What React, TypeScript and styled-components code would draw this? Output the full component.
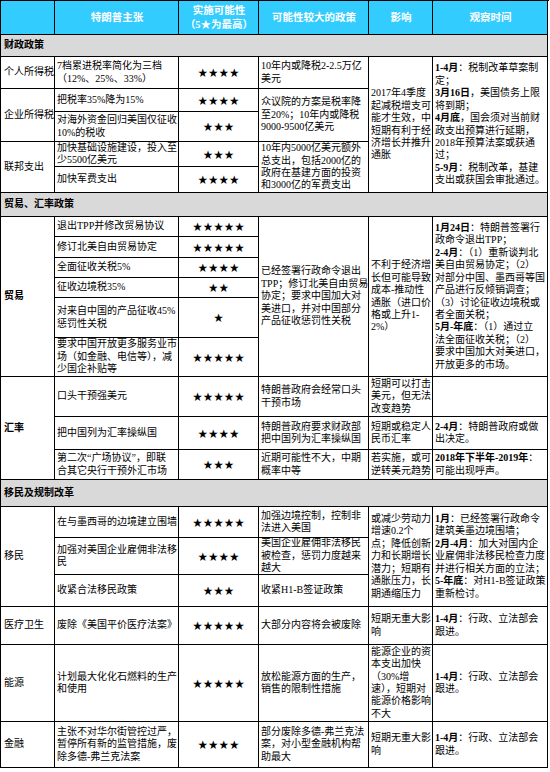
import React from 'react';
import styled, { createGlobalStyle } from 'styled-components';

const GlobalStyle = createGlobalStyle`
  html, body { margin: 0; padding: 0; background: #fff; }
  body { font-family: 'Liberation Serif', 'Noto Sans CJK SC', serif; }
`;

type Place = { $r: number; $rs?: number; $c: number; $cs?: number };

const Table = styled.div`
  display: grid;
  grid-template-columns: 54px 124px 80px 110px 64px 115px;
  grid-template-rows:
    34px 22px 32px 23px 30px 25px 26px 24px 20px 21px 20px 20px
    40px 39px 40px 33px 30px 27px 31px 37px 32px 38px 77px 46px;
  width: 548px;
  border-top: 1px solid #000;
  border-left: 1px solid #000;
`;

const Cell = styled.div<Place>`
  grid-row: ${p => `${p.$r} / span ${p.$rs ?? 1}`};
  grid-column: ${p => `${p.$c} / span ${p.$cs ?? 1}`};
  box-sizing: border-box;
  border-right: 1px solid #000;
  border-bottom: 1px solid #000;
  display: flex;
  align-items: center;
  padding: 0 1px 0 2px;
  font-size: 10px;
  line-height: 12.4px;
  color: #000;
  overflow: hidden;
  white-space: nowrap;
`;

const HeaderCell = styled(Cell)`
  background: #33ccff;
  color: #fff;
  font-weight: bold;
  justify-content: center;
  text-align: center;
  font-size: 10.5px;
  line-height: 14px;
`;

const SectionCell = styled(Cell)`
  background: #d9d9d9;
  font-weight: bold;
  padding-left: 3px;
`;

const LabelCell = styled(Cell)<{ $bold?: boolean }>`
  font-weight: ${p => (p.$bold ? 'bold' : 'normal')};
  padding-left: 3px;
`;

const StarCell = styled(Cell)`
  justify-content: center;
  font-family: 'Noto Sans CJK SC', sans-serif;
  font-size: 9.5px;
  letter-spacing: 1px;
`;

const B = styled.b`
  font-weight: bold;
`;

const Lines = ({ items }: { items: string[] }) => (
  <div>
    {items.map((t, i) => (
      <React.Fragment key={i}>
        {i > 0 && <br />}
        {t}
      </React.Fragment>
    ))}
  </div>
);

const claims: { r: number; lines: string[]; stars: number }[] = [
  { r: 3, lines: ['7档累进税率简化为三档', '（12%、25%、33%）'], stars: 4 },
  { r: 4, lines: ['把税率35%降为15%'], stars: 4 },
  { r: 5, lines: ['对海外资金回归美国仅征收', '10%的税收'], stars: 3 },
  { r: 6, lines: ['加快基础设施建设，投入至', '少5500亿美元'], stars: 3 },
  { r: 7, lines: ['加快军费支出'], stars: 4 },
  { r: 9, lines: ['退出TPP并修改贸易协议'], stars: 5 },
  { r: 10, lines: ['修订北美自由贸易协定'], stars: 5 },
  { r: 11, lines: ['全面征收关税5%'], stars: 4 },
  { r: 12, lines: ['征收边境税35%'], stars: 2 },
  { r: 13, lines: ['对来自中国的产品征收45%', '惩罚性关税'], stars: 1 },
  { r: 14, lines: ['要求中国开放更多服务业市', '场（如金融、电信等），减', '少国企补贴等'], stars: 5 },
  { r: 15, lines: ['口头干预强美元'], stars: 5 },
  { r: 16, lines: ['把中国列为汇率操纵国'], stars: 4 },
  { r: 17, lines: ['第二次“广场协议”，即联', '合其它央行干预外汇市场'], stars: 3 },
  { r: 19, lines: ['在与墨西哥的边境建立围墙'], stars: 5 },
  { r: 20, lines: ['加强对美国企业雇佣非法移', '民'], stars: 4 },
  { r: 21, lines: ['收紧合法移民政策'], stars: 3 },
  { r: 22, lines: ['废除《美国平价医疗法案》'], stars: 5 },
  { r: 23, lines: ['计划最大化化石燃料的生产', '和使用'], stars: 5 },
  { r: 24, lines: ['主张不对华尔街管控过严，', '暂停所有新的监管措施，废', '除多德-弗兰克法案'], stars: 4 },
];

const policies: { r: number; rs?: number; lines: string[] }[] = [
  { r: 3, lines: ['10年内或降税2-2.5万亿', '美元'] },
  { r: 4, rs: 2, lines: ['众议院的方案是税率降', '至20%；10年内或降税', '9000-9500亿美元'] },
  { r: 6, rs: 2, lines: ['10年内5000亿美元额外', '总支出，包括2000亿的', '政府在基建方面的投资', '和3000亿的军费支出'] },
  { r: 9, rs: 6, lines: ['已经签署行政命令退出', 'TPP；修订北美自由贸易', '协定；要求中国加大对', '美进口，并对中国部分', '产品征收惩罚性关税'] },
  { r: 15, lines: ['特朗普政府会经常口头', '干预市场'] },
  { r: 16, lines: ['特朗普政府要求财政部', '把中国列为汇率操纵国'] },
  { r: 17, lines: ['近期可能性不大，中期', '概率中等'] },
  { r: 19, lines: ['加强边境控制，控制非', '法进入美国'] },
  { r: 20, lines: ['美国企业雇佣非法移民', '被检查，惩罚力度越来', '越大'] },
  { r: 21, lines: ['收紧H1-B签证政策'] },
  { r: 22, lines: ['大部分内容将会被废除'] },
  { r: 23, lines: ['放松能源方面的生产，', '销售的限制性措施'] },
  { r: 24, lines: ['部分废除多德-弗兰克法', '案，对小型金融机构帮', '助最大'] },
];

const impacts: { r: number; rs?: number; lines: string[] }[] = [
  { r: 3, rs: 5, lines: ['2017年4季度', '起减税增支可', '能才生效，中', '短期有利于经', '济增长并推升', '通胀'] },
  { r: 9, rs: 6, lines: ['不利于经济增', '长但可能导致', '成本-推动性', '通胀（进口价', '格或上升1-', '2%）'] },
  { r: 15, lines: ['短期可以打击', '美元，但无法', '改变趋势'] },
  { r: 16, lines: ['短期或稳定人', '民币汇率'] },
  { r: 17, lines: ['若实施，或可', '逆转美元趋势'] },
  { r: 19, rs: 3, lines: ['或减少劳动力', '增速0.2个', '点；降低创新', '力和长期增长', '潜力；短期有', '通胀压力，长', '期通缩压力'] },
  { r: 22, lines: ['短期无重大影', '响'] },
  { r: 23, lines: ['能源企业的资', '本支出加快', '（30%增', '速），短期对', '能源价格影响', '不大'] },
  { r: 24, lines: ['短期无重大影', '响'] },
];

const FollowUp = () => (
  <div>
    <B>1-4月</B>：行政、立法部会<br />跟进。
  </div>
);

export default function App() {
  return (
    <>
      <GlobalStyle />
      <Table>
        <HeaderCell $r={1} $c={1} />
        <HeaderCell $r={1} $c={2}>特朗普主张</HeaderCell>
        <HeaderCell $r={1} $c={3}>
          <div>实施可能性<br />（5★为最高）</div>
        </HeaderCell>
        <HeaderCell $r={1} $c={4}>可能性较大的政策</HeaderCell>
        <HeaderCell $r={1} $c={5}>影响</HeaderCell>
        <HeaderCell $r={1} $c={6}>观察时间</HeaderCell>

        <SectionCell $r={2} $c={1} $cs={6}>财政政策</SectionCell>
        <SectionCell $r={8} $c={1} $cs={6}>贸易、汇率政策</SectionCell>
        <SectionCell $r={18} $c={1} $cs={6}>移民及规制改革</SectionCell>

        <LabelCell $r={3} $c={1}>个人所得税</LabelCell>
        <LabelCell $r={4} $rs={2} $c={1}>企业所得税</LabelCell>
        <LabelCell $r={6} $rs={2} $c={1}>联邦支出</LabelCell>
        <LabelCell $r={9} $rs={6} $c={1} $bold>贸易</LabelCell>
        <LabelCell $r={15} $rs={3} $c={1} $bold>汇率</LabelCell>
        <LabelCell $r={19} $rs={3} $c={1}>移民</LabelCell>
        <LabelCell $r={22} $c={1}>医疗卫生</LabelCell>
        <LabelCell $r={23} $c={1}>能源</LabelCell>
        <LabelCell $r={24} $c={1}>金融</LabelCell>

        {claims.map(c => (
          <React.Fragment key={c.r}>
            <Cell $r={c.r} $c={2}>
              <Lines items={c.lines} />
            </Cell>
            <StarCell $r={c.r} $c={3}>{'★'.repeat(c.stars)}</StarCell>
          </React.Fragment>
        ))}

        {policies.map(p => (
          <Cell key={p.r} $r={p.r} $rs={p.rs} $c={4}>
            <Lines items={p.lines} />
          </Cell>
        ))}

        {impacts.map(p => (
          <Cell key={p.r} $r={p.r} $rs={p.rs} $c={5}>
            <Lines items={p.lines} />
          </Cell>
        ))}

        <Cell $r={3} $rs={5} $c={6}>
          <div>
            <B>1-4月</B>：税制改革草案制<br />定；<br />
            <B>3月16日</B>，美国债务上限<br />将到期；<br />
            <B>4月底</B>，国会须对当前财<br />政支出预算进行延期，<br />
            2018年预算法案或获通<br />过；<br />
            <B>5-9月</B>：税制改革，基建<br />支出或获国会审批通过。
          </div>
        </Cell>
        <Cell $r={9} $rs={6} $c={6}>
          <div>
            <B>1月24日</B>：特朗普签署行<br />政命令退出TPP；<br />
            <B>2-4月</B>：（1）重新谈判北<br />美自由贸易协定；（2）<br />
            对部分中国、墨西哥等国<br />产品进行反倾销调查；<br />
            （3）讨论征收边境税或<br />者全面关税；<br />
            <B>5月-年底</B>：（1）通过立<br />法全面征收关税；（2）<br />
            要求中国加大对美进口，<br />开放更多的市场。
          </div>
        </Cell>
        <Cell $r={15} $c={6} />
        <Cell $r={16} $c={6}>
          <div>
            <B>2-4月</B>：特朗普政府或做<br />出决定。
          </div>
        </Cell>
        <Cell $r={17} $c={6}>
          <div>
            <B>2018年下半年-2019年</B>：<br />可能出现呼声。
          </div>
        </Cell>
        <Cell $r={19} $rs={3} $c={6}>
          <div>
            <B>1月</B>：已经签署行政命令<br />建筑美墨边境围墙；<br />
            <B>2月-4月</B>：加大对国内企<br />业雇佣非法移民检查力度<br />
            并进行相关方面的立法；<br />
            <B>5-年底</B>：对H1-B签证政策<br />重新检讨。
          </div>
        </Cell>
        <Cell $r={22} $c={6}><FollowUp /></Cell>
        <Cell $r={23} $c={6}><FollowUp /></Cell>
        <Cell $r={24} $c={6}><FollowUp /></Cell>
      </Table>
    </>
  );
}
